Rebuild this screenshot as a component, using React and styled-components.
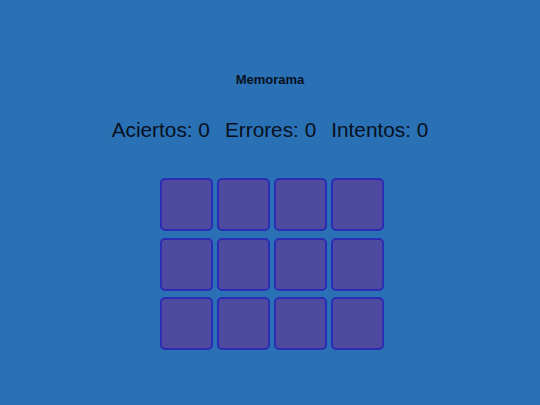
import React from "react";
import styled, { createGlobalStyle } from "styled-components";

const GlobalStyle = createGlobalStyle`
  html, body {
    margin: 0;
    padding: 0;
    background: #2a70b4;
    font-family: "Liberation Sans", Arial, sans-serif;
  }
`;

const Page = styled.div`
  width: 540px;
  height: 405px;
  display: flex;
  flex-direction: column;
  align-items: center;
  background: #2a70b4;
  box-sizing: border-box;
  padding-top: 72px;
`;

const Title = styled.h1`
  margin: 0;
  font-size: 13px;
  font-weight: bold;
  color: #08111f;
  line-height: 15px;
`;

const Stats = styled.div`
  margin-top: 31px;
  display: flex;
  gap: 15px;
  font-size: 20.8px;
  line-height: 24px;
  color: #08111f;
`;

const Board = styled.div`
  margin-top: 36px;
  padding-left: 3px;
  display: grid;
  grid-template-columns: repeat(4, 53px);
  grid-auto-rows: 53px;
  column-gap: 4px;
  row-gap: 6.5px;
`;

const Card = styled.button`
  box-sizing: border-box;
  width: 53px;
  height: 53px;
  padding: 0;
  background: #4d4aa0;
  border: 2px solid #2b2bb4;
  border-radius: 5px;
  cursor: pointer;
`;

export default function App() {
  const cards = Array.from({ length: 12 }, (_, i) => i);
  return (
    <Page>
      <GlobalStyle />
      <Title>Memorama</Title>
      <Stats>
        <span>Aciertos: 0</span>
        <span>Errores: 0</span>
        <span>Intentos: 0</span>
      </Stats>
      <Board>
        {cards.map((i) => (
          <Card key={i} aria-label={`carta ${i + 1}`} />
        ))}
      </Board>
    </Page>
  );
}
